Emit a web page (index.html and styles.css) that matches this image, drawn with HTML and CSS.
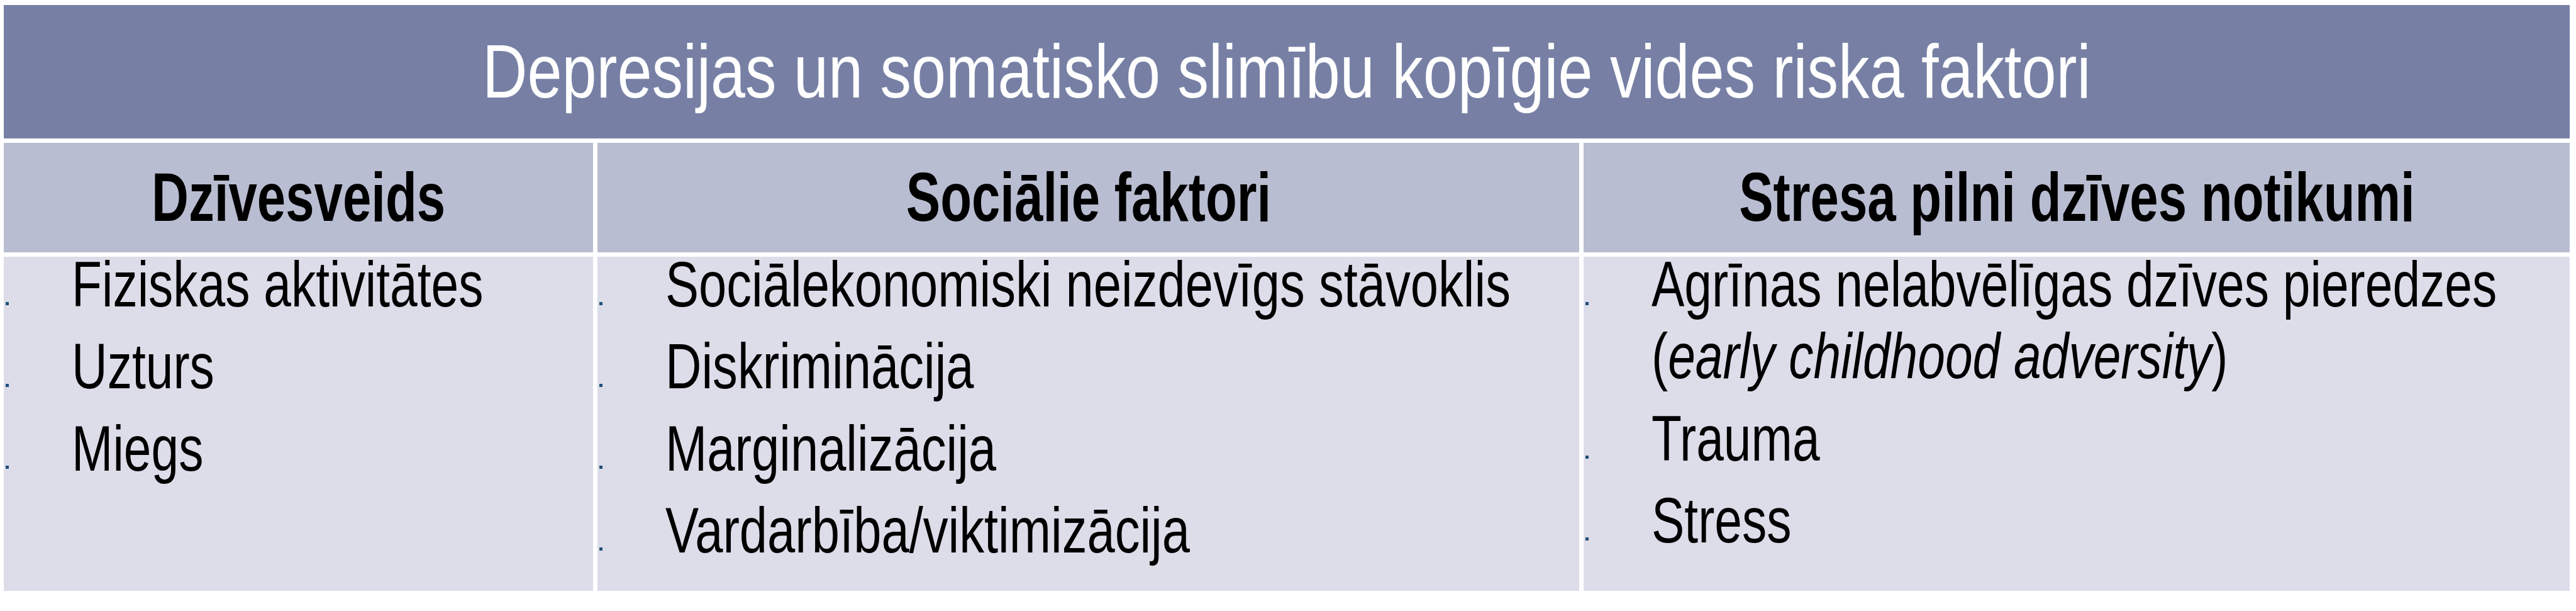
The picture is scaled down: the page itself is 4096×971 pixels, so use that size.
FILE: index.html
```html
<!DOCTYPE html>
<html lang="lv">
<head>
<meta charset="utf-8">
<title>Depresijas un somatisko slimību kopīgie vides riska faktori</title>
<link rel="stylesheet" href="styles.css">
</head>
<body>
<div class="tbl">
  <div class="title"><span class="title-t">Depresijas un somatisko slimību kopīgie vides riska faktori</span></div>

  <div class="head"><span class="head-t">Dzīvesveids</span></div>
  <div class="head"><span class="head-t">Sociālie faktori</span></div>
  <div class="head"><span class="head-t">Stresa pilni dzīves notikumi</span></div>

  <div class="cell">
    <ul class="list">
      <li><i class="dot"></i><span class="lx"><span class="ln">Fiziskas aktivitātes</span></span></li>
      <li><i class="dot"></i><span class="lx"><span class="ln">Uzturs</span></span></li>
      <li><i class="dot"></i><span class="lx"><span class="ln">Miegs</span></span></li>
    </ul>
  </div>
  <div class="cell cell-wide">
    <ul class="list">
      <li><i class="dot"></i><span class="lx"><span class="ln">Sociālekonomiski neizdevīgs stāvoklis</span></span></li>
      <li><i class="dot"></i><span class="lx"><span class="ln">Diskriminācija</span></span></li>
      <li><i class="dot"></i><span class="lx"><span class="ln">Marginalizācija</span></span></li>
      <li><i class="dot"></i><span class="lx"><span class="ln">Vardarbība/viktimizācija</span></span></li>
    </ul>
  </div>
  <div class="cell">
    <ul class="list">
      <li><i class="dot"></i><span class="lx"><span class="ln">Agrīnas nelabvēlīgas dzīves pieredzes</span><span class="ln">(<em>early childhood adversity</em>)</span></span></li>
      <li><i class="dot"></i><span class="lx"><span class="ln">Trauma</span></span></li>
      <li><i class="dot"></i><span class="lx"><span class="ln">Stress</span></span></li>
    </ul>
  </div>
</div>
</body>
</html>
```

FILE: styles.css
```css
html, body {
  margin: 0;
  padding: 0;
  background: #ffffff;
  overflow: hidden;
}

body {
  padding: 8px 0 0 6px;
  font-family: "Liberation Sans", Arial, sans-serif;
  color: #000000;
}

.tbl {
  width: 4080px;
  display: grid;
  grid-template-columns: 937px 1561px 1568px;
  grid-template-rows: 212px 174px 531px;
  column-gap: 7px;
  row-gap: 7px;
}

.title {
  grid-column: 1 / 4;
  background: #7780a4;
  display: flex;
  align-items: center;
  justify-content: center;
}

.title-t {
  display: inline-block;
  white-space: nowrap;
  color: #ffffff;
  font-size: 120.4px;
  line-height: 1.15;
  font-weight: 400;
  transform: scaleX(0.822);
  transform-origin: 50% 50%;
}

.head {
  background: #b9bdd1;
  display: flex;
  align-items: center;
  justify-content: center;
}

.head-t {
  display: inline-block;
  white-space: nowrap;
  font-size: 108.5px;
  line-height: 1.15;
  font-weight: 700;
  transform: scaleX(0.752);
  transform-origin: 50% 50%;
}

.cell {
  background: #dcdde9;
  min-width: 0;
}

.list {
  list-style: none;
  margin: 3px 0 0 0;
  padding: 0;
  display: flex;
  flex-direction: column;
  gap: 48.3px;
}

.list li {
  display: flex;
  align-items: flex-start;
  white-space: nowrap;
}

.dot {
  flex: none;
  display: block;
  width: 5px;
  height: 5px;
  margin: 68.5px 99.5px 0 3px;
  background: #1f4e79;
}

.lx {
  display: flex;
  flex-direction: column;
  gap: 32.4px;
  width: 0;
  font-size: 102.5px;
  line-height: 82px;
  transform: scaleX(0.766);
  transform-origin: 0 50%;
}

.cell-wide .lx {
  transform: scaleX(0.776);
}

.ln {
  display: block;
}

.ln em {
  font-style: italic;
}
```
